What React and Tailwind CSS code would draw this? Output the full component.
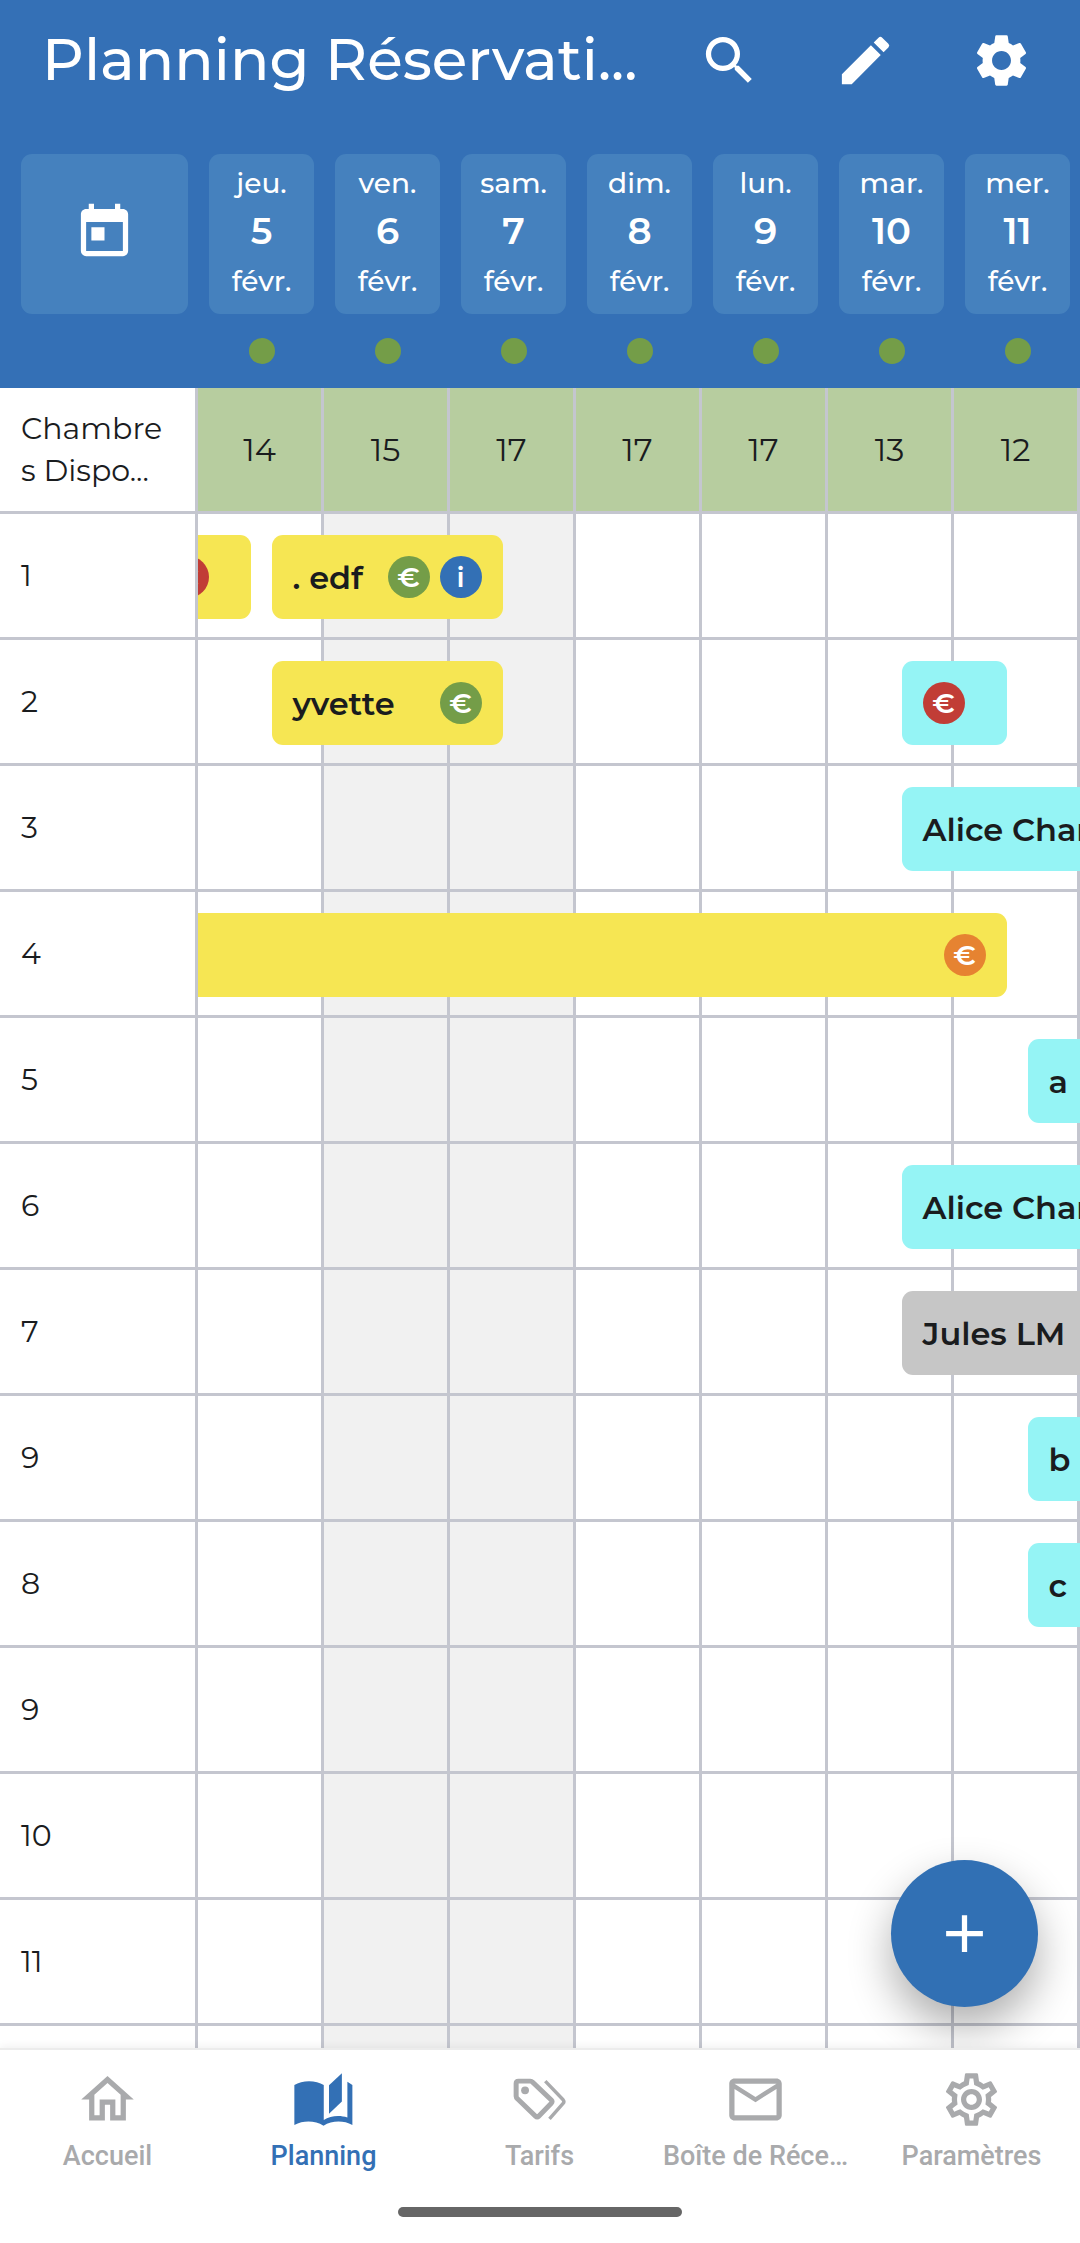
import {
    MdAdd,
    MdEdit,
    MdOutlineEmail,
    MdOutlineHome,
    MdOutlineSettings,
    MdSearch,
    MdSettings,
    MdToday,
} from "react-icons/md";

const days = [
    { name: "jeu.", num: 5, month: "févr.", free: 14 },
    { name: "ven.", num: 6, month: "févr.", free: 15, shaded: true },
    { name: "sam.", num: 7, month: "févr.", free: 17, shaded: true },
    { name: "dim.", num: 8, month: "févr.", free: 17 },
    { name: "lun.", num: 9, month: "févr.", free: 17 },
    { name: "mar.", num: 10, month: "févr.", free: 13 },
    { name: "mer.", num: 11, month: "févr.", free: 12 },
];

// start is the arrival day's column, it can be negative when the guest is already there
const rooms = [
    {
        label: "1",
        bookings: [
            { start: -1, nights: 1, color: "yellow", badges: ["unpaid"] },
            { start: 0, nights: 2, color: "yellow", guest: ". edf", badges: ["paid", "info"] },
        ],
    },
    {
        label: "2",
        bookings: [
            { start: 0, nights: 2, color: "yellow", guest: "yvette", badges: ["paid"] },
            { start: 5, nights: 1, color: "cyan", badges: ["unpaid"] },
        ],
    },
    { label: "3", bookings: [{ start: 5, nights: 3, color: "cyan", guest: "Alice Char" }] },
    { label: "4", bookings: [{ start: -2, nights: 8, color: "yellow", badges: ["partial"] }] },
    { label: "5", bookings: [{ start: 6, nights: 2, color: "cyan", guest: "a" }] },
    { label: "6", bookings: [{ start: 5, nights: 3, color: "cyan", guest: "Alice Char" }] },
    { label: "7", bookings: [{ start: 5, nights: 3, color: "gray", guest: "Jules LM" }] },
    { label: "9", bookings: [{ start: 6, nights: 2, color: "cyan", guest: "b" }] },
    { label: "8", bookings: [{ start: 6, nights: 2, color: "cyan", guest: "c" }] },
    { label: "9", bookings: [] },
    { label: "10", bookings: [] },
    { label: "11", bookings: [] },
    { label: "", bookings: [] },
];

const barColors = {
    yellow: "bg-[#f6e653]",
    cyan: "bg-[#95f4f5]",
    gray: "bg-[#c6c6c6]",
};

const badgeColors = {
    paid: "bg-[#749d48]",
    unpaid: "bg-[#c13d36]",
    partial: "bg-[#e68331]",
    info: "bg-[#3370b5]",
};

const BookIcon = ({ className }) => (
    <svg viewBox="0 0 24 24" fill="currentColor" className={className}>
        <path d="M.9 6.5C3.8 4.5 9.2 4.5 12.1 6.5V19.8C14.6 18.2 18.2 17.9 21.1 18.9V5.2L23 6.5V21.7C19.6 19.9 15.2 20 12 22C8.8 20 4.4 19.9 .9 21.7Z" />
        <path d="M14.1 6.6L19 2V12.8L14.1 17.4Z" />
    </svg>
);

const TagsIcon = ({ className }) => (
    <svg
        viewBox="0 0 24 24"
        fill="none"
        stroke="currentColor"
        strokeLinecap="round"
        strokeLinejoin="round"
        className={className}
    >
        <path
            strokeWidth="1.9"
            d="M4 5H8.5Q9 5 9.4 5.4L16.5 12.2Q17.1 12.8 16.5 13.4L11.7 18.4Q11.1 19 10.5 18.4L3.6 11.7Q3.1 11.3 3.1 10.8V5.9Q3.1 5 4 5Z"
        />
        <circle cx="6.5" cy="8.5" r="1.5" fill="currentColor" stroke="none" />
        <path
            strokeWidth="1.3"
            strokeLinecap="butt"
            d="M14.2 5L21 12.1Q21.6 12.8 21 13.5L15.8 19.4"
        />
    </svg>
);

const tabs = [
    { label: "Accueil", Icon: MdOutlineHome },
    { label: "Planning", Icon: BookIcon, active: true },
    { label: "Tarifs", Icon: TagsIcon },
    { label: "Boîte de Réce…", Icon: MdOutlineEmail },
    { label: "Paramètres", Icon: MdOutlineSettings },
];

// a stay runs from the middle of the arrival day to the middle of the departure day,
// each night also crosses the 3px line between two cells
const Booking = ({ start, nights, color, guest, badges = [] }) => {
    const before = Math.min(start, 0);
    return (
        <button
            type="button"
            aria-label={guest || "Réservation"}
            className={`absolute top-[21px] z-[1] flex h-[84px] items-center gap-[10px] rounded-[11px] px-[21px] text-left ${barColors[color]}`}
            style={{
                left: `calc(${before * 100 + 50}% + ${before * 3 + 12}px)`,
                width: `calc(${nights * 100}% + ${nights * 3 - 21}px)`,
            }}
        >
            {(guest || nights > 1) && (
                <span className="flex-1 pt-[2px] whitespace-nowrap text-[32px] leading-[42px] font-semibold">
                    {guest}
                </span>
            )}
            {badges.map((badge) => (
                <span
                    key={badge}
                    className={`flex size-[42px] shrink-0 items-center justify-center rounded-full text-[28px] leading-none font-semibold text-white ${badgeColors[badge]}`}
                >
                    {badge === "info" ? "i" : "€"}
                </span>
            ))}
        </button>
    );
};

const Header = () => (
    <header className="shrink-0 bg-[#3470b6] text-white">
        <div className="flex h-[120px] items-center gap-[40px] pr-[47px] pl-[42px]">
            <h1 className="min-w-0 flex-1 truncate text-[58px] leading-[74px] font-medium">
                Planning Réservati...
            </h1>
            <div className="flex gap-[73px]">
                <button type="button" aria-label="Rechercher">
                    <MdSearch className="size-[63px]" />
                </button>
                <button type="button" aria-label="Modifier">
                    <MdEdit className="size-[63px]" />
                </button>
                <button type="button" aria-label="Réglages">
                    <MdSettings className="size-[63px]" />
                </button>
            </div>
        </div>

        {/* Days */}
        <div className="flex pt-[34px] pb-[24px]">
            <div className="w-[198px] shrink-0 pr-[10px] pl-[21px]">
                <button
                    type="button"
                    aria-label="Choisir une date"
                    className="flex h-[160px] w-full items-center justify-center rounded-[11px] bg-[#4581be] pb-[3px]"
                >
                    <MdToday className="size-[63px]" />
                </button>
            </div>
            <div className="grid flex-1 grid-cols-7">
                {days.map((day) => (
                    <div key={day.num} className="flex flex-col items-center pr-[10px] pl-[11px]">
                        <button
                            type="button"
                            className="flex h-[160px] w-full flex-col items-center justify-center rounded-[11px] bg-[#4581be] pb-[5px] text-[28px] leading-[42px] font-medium"
                        >
                            <span>{day.name}</span>
                            <span className="pb-[2px] text-[37px] leading-[54px] font-semibold">
                                {day.num}
                            </span>
                            <span>{day.month}</span>
                        </button>
                        <span className="mt-[24px] size-[26px] rounded-full bg-[#749d48]" />
                    </div>
                ))}
            </div>
        </div>
    </header>
);

const Planning = () => (
    <table className="w-full table-fixed border-separate border-spacing-0">
        <thead>
            <tr className="h-[126px]">
                <th className="relative z-10 w-[198px] border-r-3 border-b-3 border-[#c4c6cf] bg-white pl-[21px] text-left text-[30px] leading-[42px] font-normal">
                    Chambre
                    <br />s Dispo...
                </th>
                {days.map((day) => (
                    <th
                        key={day.num}
                        className="border-r-3 border-b-3 border-[#c4c6cf] bg-[#b7cd9f] text-[32px] leading-[42px] font-normal"
                    >
                        {day.free}
                    </th>
                ))}
            </tr>
        </thead>
        <tbody>
            {rooms.map((room, index) => (
                <tr key={index} className="h-[126px]">
                    <th className="relative z-10 border-r-3 border-b-3 border-[#c4c6cf] bg-white pl-[21px] text-left text-[30px] leading-[42px] font-normal">
                        {room.label}
                    </th>
                    {days.map((day, column) => (
                        <td
                            key={day.num}
                            className={`relative border-r-3 border-b-3 border-[#c4c6cf] p-0 ${day.shaded ? "bg-[#f1f1f1]" : "bg-white"}`}
                        >
                            {room.bookings
                                .filter((booking) => Math.max(booking.start, 0) === column)
                                .map((booking) => (
                                    <Booking key={booking.start} {...booking} />
                                ))}
                        </td>
                    ))}
                </tr>
            ))}
        </tbody>
    </table>
);

const App = () => {
    return (
        <div className="flex h-screen flex-col overflow-hidden bg-white font-['Montserrat','Inter',sans-serif] text-[#1a1c1e]">
            <Header />
            <main className="relative min-h-0 flex-1 overflow-hidden">
                <Planning />
                <button
                    type="button"
                    aria-label="Ajouter une réservation"
                    className="absolute right-[42px] bottom-[41px] z-20 flex size-[147px] items-center justify-center rounded-full bg-[#3170b4] text-white shadow-[0_20px_44px_rgba(0,0,0,0.32)]"
                >
                    <MdAdd className="size-[63px]" />
                </button>
            </main>

            {/* Bottom tabs */}
            <footer className="relative z-30 shrink-0 border-t-2 border-[#ececec] bg-white pb-[26px] shadow-[0_-2px_8px_rgba(0,0,0,0.06)]">
                <nav className="grid grid-cols-5 pt-[18px] font-['Roboto',sans-serif]">
                    {tabs.map(({ label, Icon, active }) => (
                        <a
                            key={label}
                            href="#"
                            aria-current={active ? "page" : undefined}
                            className={`flex flex-col items-center gap-[7px] pr-px text-[27px] leading-[36px] font-medium ${active ? "text-[#3370b5]" : "text-[#a9aaac]"}`}
                        >
                            <Icon className="size-[63px]" />
                            {label}
                        </a>
                    ))}
                </nav>
                <div className="mx-auto mt-[33px] h-[10px] w-[284px] rounded-full bg-[#666]" />
            </footer>
        </div>
    );
};

export default App;
